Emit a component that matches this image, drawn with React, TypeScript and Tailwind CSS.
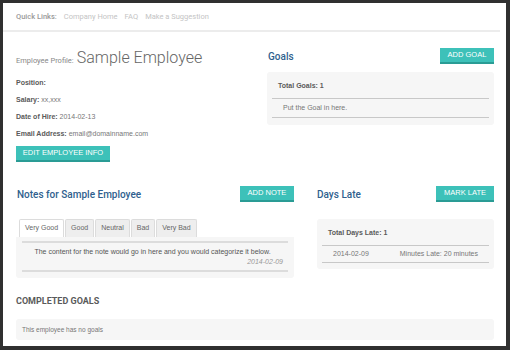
import React from 'react';

const body = { fontFamily: '"Liberation Sans", Arial, sans-serif' };
const head = { fontFamily: 'Roboto, "Liberation Sans", sans-serif' };

const Button: React.FC<{ label: string; className?: string }> = ({ label, className }) => (
  <button
    className={`h-[16px] bg-[#3dc1b9] border-b-2 border-[#2a9c95] text-white text-[7.5px] leading-[14px] uppercase ${className ?? ''}`}
    style={body}
  >
    {label}
  </button>
);

const tabs = ['Very Good', 'Good', 'Neutral', 'Bad', 'Very Bad'];

const App: React.FC = () => {
  return (
    <div className="w-[510px] h-[350px] bg-[#303030] pt-[3px] pl-[3px] pr-[4px] pb-[4px]">
      <div className="w-full h-full bg-white flex flex-col text-[#5a5a5a]" style={body}>
        {/* Quick links bar */}
        <div className="h-[29px] mr-[6px] border-b-2 border-[#ececec] flex items-center pl-[13px] gap-[7px] text-[7.5px]" style={head}>
          <span className="text-[#9a9a9a] font-medium">Quick Links:</span>
          <span className="text-[#c4c4c4]">Company Home</span>
          <span className="text-[#c4c4c4]">FAQ</span>
          <span className="text-[#c4c4c4]">Make a Suggestion</span>
        </div>

        <div className="pl-[13px] pr-[12px] flex flex-col">
          {/* Profile + goals */}
          <div className="flex mt-[14px]">
            <div className="w-[251px] flex flex-col">
              <div className="flex items-baseline gap-[3px] h-[24px]" style={head}>
                <span className="text-[7.5px] text-[#888]">Employee Profile:</span>
                <span className="text-[16px] font-light text-[#666] leading-[24px]">Sample Employee</span>
              </div>
              <div className="mt-[8px] flex flex-col gap-[7px] text-[7px] leading-[10px]">
                <div><b>Position:</b></div>
                <div><b>Salary:</b> <span className="text-[#777]">xx,xxx</span></div>
                <div><b>Date of Hire:</b> <span className="text-[#777]">2014-02-13</span></div>
                <div><b>Email Address:</b> <span className="text-[#777]">email@domainname.com</span></div>
              </div>
              <Button label="Edit Employee Info" className="mt-[7px] w-[94px]" />
            </div>

            <div className="flex-1 flex flex-col pt-[2px]">
              <div className="flex justify-between items-center h-[16px]">
                <span className="text-[10px] font-medium text-[#2f5f8e] pl-[1px]" style={head}>Goals</span>
                <Button label="Add Goal" className="w-[54px]" />
              </div>
              <div className="mt-[8px] bg-[#f6f6f6] rounded-[3px] px-[5px] pt-[9px] pb-[7px] text-[7px]">
                <div className="font-bold pl-[6px] h-[17px] leading-[10px]">Total Goals: 1</div>
                <div className="border-t border-[#c8c8c8] border-b h-[20px] flex items-center pl-[11px] text-[#777]">
                  Put the Goal in here.
                </div>
              </div>
            </div>
          </div>

          {/* Notes + days late */}
          <div className="flex mt-[24px]">
            <div className="w-[278px] flex flex-col">
              <div className="flex justify-between items-center h-[16px]">
                <span className="text-[10px] font-medium text-[#2f5f8e] pl-[1px]" style={head}>Notes for Sample Employee</span>
                <Button label="Add Note" className="w-[54px]" />
              </div>
              <div className="mt-[17px] flex pl-[3px] h-[18px] items-end">
                {tabs.map((t, i) => (
                  <div
                    key={t}
                    className={`h-[18px] px-[5px] mr-[1px] border border-b-0 border-[#dcdcdc] rounded-t-[2px] flex items-center text-[7px] text-[#666] ${
                      i === 0 ? 'bg-white' : 'bg-[#eeeeee]'
                    }`}
                  >
                    {t}
                  </div>
                ))}
              </div>
              <div className="bg-[#f6f6f6] rounded-b-[3px] px-[6px] pt-[4px] pb-[6px] text-[7px]">
                <div className="border-t-2 border-b-2 border-[#dcdcdc] h-[31px] flex flex-col pt-[4px] pr-[5px]">
                  <div className="text-center text-[#555] leading-[10px]">
                    The content for the note would go in here and you would categorize it below.
                  </div>
                  <div className="text-right italic text-[#999] leading-[10px]">2014-02-09</div>
                </div>
              </div>
            </div>

            <div className="flex-1 flex flex-col pl-[23px]">
              <div className="flex justify-between items-center h-[16px]">
                <span className="text-[10px] font-medium text-[#2f5f8e]" style={head}>Days Late</span>
                <Button label="Mark Late" className="w-[58px]" />
              </div>
              <div className="mt-[17px] bg-[#f6f6f6] rounded-[3px] px-[5px] pt-[9px] pb-[6px] text-[7px]">
                <div className="font-bold pl-[6px] h-[17px] leading-[10px]">Total Days Late: 1</div>
                <div className="border-t border-[#c8c8c8] border-b h-[18px] flex items-center justify-between pl-[11px] pr-[11px] text-[#777]">
                  <span>2014-02-09</span>
                  <span>Minutes Late: 20 minutes</span>
                </div>
              </div>
            </div>
          </div>

          {/* Completed goals */}
          <div className="mt-[17px] text-[9px] font-bold text-[#5a5a5a] leading-[12px]" style={head}>COMPLETED GOALS</div>
          <div className="mt-[12px] h-[21px] bg-[#f6f6f6] rounded-[3px] flex items-center pl-[6px] text-[6.5px] text-[#777]">
            This employee has no goals
          </div>
        </div>
      </div>
    </div>
  );
};

export default App;
